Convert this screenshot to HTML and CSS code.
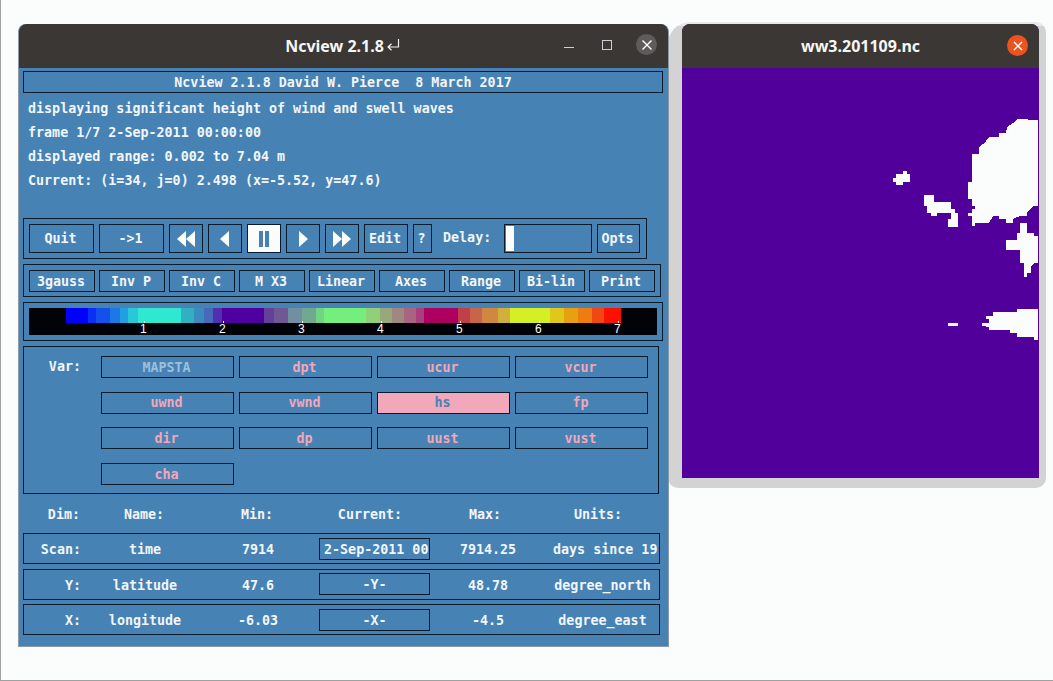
FILE: index.html
```html
<!DOCTYPE html>
<html lang="en">
  <head>
    <meta charset="utf-8">
    <title>Ncview</title>
    <link rel="stylesheet" href="styles.css">
  </head>
  <body>
    <div class="desktop">

      <!-- picture window goes first, the control window sits over its shadow -->
      <div class="map_shadow"></div>
      <div class="window map_window">
        <div class="titlebar">
          <span class="title">ww3.201109.nc</span>
          <span class="close close_active">
            <svg width="10" height="10" viewBox="0 0 10 10"><path d="M1 1L9 9M9 1L1 9" stroke="#fff" stroke-width="1.4"/></svg>
          </span>
        </div>
        <svg class="map" width="356" height="410" viewBox="682 68 356 410" shape-rendering="crispEdges">
          <rect x="682" y="68" width="356" height="410" fill="#52009c"/>
          <g fill="#fbfdfd">
            <polygon points="1038,120 1017,119 1013,123 1007,127 1006,133 999,133 999,137 989,137 986,141 983,144 979,147 979,154 972,154 972,182 968,182 968,199 972,199 972,206 975,206 975,209 972,209 972,213 968,213 968,216 972,216 972,226 975,226 975,223 989,223 993,216 999,216 999,219 1006,219 1006,223 1013,223 1013,219 1020,216 1027,216 1027,213 1033,206 1038,206"/>
            <polygon points="903,171 907,171 907,174 910,174 910,182 903,182 903,185 896,185 896,182 893,182 893,178 896,178 896,174 903,174"/>
            <polygon points="924,195 934,195 934,202 951,202 951,209 955,209 955,213 958,213 958,227 948,227 948,219 951,219 951,213 937,213 937,216 931,216 931,213 927,213 927,206 924,206"/>
            <polygon points="1020,223 1027,223 1027,233 1034,233 1034,236 1038,236 1038,263 1034,263 1031,267 1031,273 1027,273 1027,277 1024,277 1024,263 1020,263 1020,250 1006,250 1006,240 1017,240 1017,233 1020,233"/>
            <polygon points="1017,309 1038,309 1038,340 1034,340 1034,337 1017,337 1017,333 1010,333 1010,330 989,330 989,327 982,326 982,323 989,323 989,319 986,319 986,316 993,316 993,312 1017,312"/>
            <rect x="948" y="323" width="10" height="3"/>
          </g>
        </svg>
      </div>

      <div class="window control_window">
        <div class="titlebar">
          <span class="title">Ncview 2.1.8
            <svg class="return_mark" width="13" height="12" viewBox="0 0 13 12"><path d="M11.5 0V8H1M4.5 4.8L1 8L4.5 11.2" fill="none" stroke="#f2f2f2" stroke-width="1.2"/></svg>
          </span>
          <div class="window_btns">
            <span class="win_min"></span>
            <span class="win_max"></span>
            <span class="close">
              <svg width="10" height="10" viewBox="0 0 10 10"><path d="M0.5 0.5L9.5 9.5M9.5 0.5L0.5 9.5" stroke="#fff" stroke-width="1.4"/></svg>
            </span>
          </div>
        </div>

        <div class="body">
          <div class="version">Ncview 2.1.8 David W. Pierce  8 March 2017</div>

          <div class="info">
            <p>displaying significant height of wind and swell waves</p>
            <p>frame 1/7 2-Sep-2011 00:00:00</p>
            <p>displayed range: 0.002 to 7.04 m</p>
            <p>Current: (i=34, j=0) 2.498 (x=-5.52, y=47.6)</p>
          </div>

          <div class="panel controls">
            <button class="btn wide">Quit</button>
            <button class="btn wide">-&gt;1</button>
            <button class="btn icon">
              <svg width="20" height="16" viewBox="0 0 20 16"><path d="M10 0V16L1 8ZM19 0V16L10 8Z" fill="#fbfdfd"/></svg>
            </button>
            <button class="btn icon">
              <svg width="10" height="16" viewBox="0 0 10 16"><path d="M9 0V16L0 8Z" fill="#fbfdfd"/></svg>
            </button>
            <button class="btn icon pause">
              <svg width="12" height="16" viewBox="0 0 12 16"><path d="M1 0H5V16H1ZM7 0H11V16H7Z" fill="#4682b4"/></svg>
            </button>
            <button class="btn icon">
              <svg width="10" height="16" viewBox="0 0 10 16"><path d="M1 0V16L10 8Z" fill="#fbfdfd"/></svg>
            </button>
            <button class="btn icon">
              <svg width="18" height="16" viewBox="0 0 18 16"><path d="M0 0V16L9 8ZM9 0V16L18 8Z" fill="#fbfdfd"/></svg>
            </button>
            <button class="btn edit">Edit</button>
            <button class="btn help">?</button>
            <span class="delay_label">Delay:</span>
            <div class="delay"><div class="delay_thumb"></div></div>
            <button class="btn opts">Opts</button>
          </div>

          <div class="panel options">
            <button class="btn">3gauss</button>
            <button class="btn">Inv P</button>
            <button class="btn">Inv C</button>
            <button class="btn">M X3</button>
            <button class="btn">Linear</button>
            <button class="btn">Axes</button>
            <button class="btn">Range</button>
            <button class="btn">Bi-lin</button>
            <button class="btn">Print</button>
          </div>

          <div class="panel colorbar_panel">
            <div class="colorbar">
              <div class="colors"></div>
              <div class="ticks">
                <span class="tick">1</span>
                <span class="tick">2</span>
                <span class="tick">3</span>
                <span class="tick">4</span>
                <span class="tick">5</span>
                <span class="tick">6</span>
                <span class="tick">7</span>
              </div>
            </div>
          </div>

          <div class="panel vars">
            <div class="var_label">Var:</div>
            <div class="var_grid">
              <button class="btn var dim_var">MAPSTA</button>
              <button class="btn var">dpt</button>
              <button class="btn var">ucur</button>
              <button class="btn var">vcur</button>
              <button class="btn var">uwnd</button>
              <button class="btn var">vwnd</button>
              <button class="btn var selected">hs</button>
              <button class="btn var">fp</button>
              <button class="btn var">dir</button>
              <button class="btn var">dp</button>
              <button class="btn var">uust</button>
              <button class="btn var">vust</button>
              <button class="btn var">cha</button>
            </div>
          </div>

          <div class="dim_head">
            <span class="right">Dim:</span>
            <span>Name:</span>
            <span>Min:</span>
            <span>Current:</span>
            <span>Max:</span>
            <span>Units:</span>
          </div>

          <div class="dim_row">
            <span class="right">Scan:</span>
            <span>time</span>
            <span>7914</span>
            <span class="current left">2-Sep-2011 00</span>
            <span>7914.25</span>
            <span class="units">days since 19</span>
          </div>
          <div class="dim_row">
            <span class="right">Y:</span>
            <span>latitude</span>
            <span>47.6</span>
            <span class="current">-Y-</span>
            <span>48.78</span>
            <span>degree_north</span>
          </div>
          <div class="dim_row">
            <span class="right">X:</span>
            <span>longitude</span>
            <span>-6.03</span>
            <span class="current">-X-</span>
            <span>-4.5</span>
            <span>degree_east</span>
          </div>
        </div>
      </div>

    </div>
  </body>
</html>
```

FILE: styles.css
```css
* {
  box-sizing: border-box;
}

body {
  margin: 0;
  background: #fbfcfc;
}

p {
  margin: 0;
}

.desktop {
  position: relative;
  width: 1053px;
  height: 681px;
  overflow: hidden;
  border-left: 1px solid #a0a0a0;
  border-bottom: 1px solid #a0a0a0;
}

/* windows */
.window {
  position: absolute;
  border-radius: 8px 8px 0 0;
}

.control_window {
  left: 17px;
  top: 24px;
  width: 651px;
  height: 623px;
  border: 1px solid #8d9aa5;
  border-top: none;
  background: #4682b4;
}

.map_window {
  left: 681px;
  top: 24px;
  width: 357px;
  height: 454px;
  background: #52009c;
}

.map_shadow {
  position: absolute;
  left: 667px;
  top: 22px;
  width: 378px;
  height: 466px;
  border-radius: 22px 10px 10px 10px;
  background: linear-gradient(#e8e8e8 0 4px, #d3d3d3 4px);
}

.titlebar {
  position: relative;
  height: 44px;
  display: flex;
  align-items: center;
  justify-content: center;
  background: #3a3735;
  border-radius: 8px 8px 0 0;
  color: #f6f6f6;
  font-family: "Noto Sans", sans-serif;
  font-size: 16px;
  font-weight: 700;
}

.title {
  display: flex;
  align-items: center;
  gap: 3px;
}

.return_mark {
  margin-top: -2px;
  margin-right: 2px;
}

.window_btns {
  position: absolute;
  right: 11px;
  top: 10px;
  display: flex;
  align-items: center;
}

.win_min {
  width: 10px;
  height: 1px;
  margin-top: 6px;
  margin-right: 28px;
  background: #cfcfcf;
}

.win_max {
  width: 10px;
  height: 10px;
  margin-right: 24px;
  border: 1px solid #cfcfcf;
}

.close {
  width: 21px;
  height: 21px;
  display: flex;
  align-items: center;
  justify-content: center;
  border-radius: 50%;
  background: #5e5c5a;
}

.close_active {
  position: absolute;
  right: 11px;
  top: 11px;
  background: #e95420;
}

.map {
  display: block;
}

/* ncview's own widgets */
.body {
  height: 579px;
  padding: 3px 0 0 4px;
  font-family: "DejaVu Sans Mono", monospace;
  font-size: 13.35px;
  font-weight: 700;
  color: #f2f6f9;
}

.version {
  width: 640px;
  height: 22px;
  line-height: 22px;
  border: 1px solid #0b1a28;
  text-align: center;
  white-space: pre;
}

.info {
  margin-top: 3px;
  margin-bottom: 26px;
  padding-left: 5px;
}

.info p {
  height: 24px;
  line-height: 26px;
}

.panel {
  border: 1px solid #0b1a28;
  margin-bottom: 5px;
}

.btn {
  margin: 0;
  padding: 0 2px 0 0;
  background: #4682b4;
  border: 1px solid #0b1a28;
  color: #f2f6f9;
  font-family: "DejaVu Sans Mono", monospace;
  font-size: 13.35px;
  font-weight: 700;
  white-space: nowrap;
}

.controls {
  width: 624px;
  height: 41px;
  padding: 5px;
  display: flex;
  align-items: stretch;
  gap: 5px;
}

.wide {
  width: 65px;
}

.icon {
  width: 34px;
  padding: 0;
  display: flex;
  align-items: center;
  justify-content: center;
}

.pause {
  background: #fbfdfd;
}

.edit {
  width: 44px;
}

.help {
  width: 19px;
}

.delay_label {
  width: 62px;
  padding-left: 6px;
  line-height: 28px;
}

.delay {
  width: 88px;
  padding: 1px;
  border: 1px solid #0b1a28;
}

.delay_thumb {
  width: 8px;
  height: 100%;
  background: #fbfdfd;
}

.opts {
  width: 43px;
}

.options {
  width: 638px;
  height: 33px;
  padding: 5px 5px 4px;
  display: flex;
  gap: 4px;
}

.options .btn {
  width: 66px;
}

.colorbar_panel {
  width: 640px;
  height: 39px;
  padding: 5px;
}

.colorbar {
  width: 628px;
  height: 27px;
  padding-left: 37px;
  background: #020308;
}

.colors {
  width: 555px;
  height: 15px;
  background: linear-gradient(90deg,
    #0000ff 0 22px, #0a30f4 22px 30px, #1450ec 30px 44px, #1c78e4 44px 54px,
    #20a0e0 54px 62px, #28c8d8 62px 72px, #2ee8d0 72px 115px, #30b0c0 115px 128px,
    #3a8cc0 128px 138px, #4868b8 138px 147px, #5030b0 147px 156px, #5000a0 156px 198px,
    #644098 198px 208px, #705894 208px 222px, #7090a0 222px 236px, #70a890 236px 250px,
    #70d480 250px 258px, #74ee7c 258px 300px, #90d078 300px 314px, #98a87c 314px 326px,
    #a08880 326px 338px, #a86480 338px 350px, #a84080 350px 358px, #ae0060 358px 392px,
    #c04048 392px 404px, #c86448 404px 416px, #d08840 416px 432px, #d0b038 432px 444px,
    #d4f024 444px 484px, #e0c818 484px 498px, #e8a010 498px 512px, #ee7c10 512px 526px,
    #f04810 526px 538px, #ff1000 538px 555px);
}

.ticks {
  display: flex;
  margin-left: 78px;
  color: #fff;
  font-family: "Liberation Sans", sans-serif;
  font-size: 12px;
  font-weight: 400;
  line-height: 12px;
}

.tick {
  position: relative;
  width: 79px;
  flex: none;
  margin-left: -4px;
  margin-right: 4px;
}

.tick::before {
  content: "";
  position: absolute;
  left: 4px;
  top: -2px;
  width: 1px;
  height: 2px;
  background: #fff;
}

.vars {
  width: 636px;
  height: 148px;
  padding: 9px 0 0 0;
  display: flex;
  margin-bottom: 0;
}

.var_label {
  width: 57px;
  margin-right: 20px;
  text-align: right;
  line-height: 22px;
}

.var_grid {
  display: grid;
  grid-template-columns: repeat(4, 133px);
  grid-auto-rows: 22px;
  column-gap: 5px;
  row-gap: 13.7px;
}

.var {
  color: #f4a6b8;
}

.dim_var {
  color: #9cc0da;
}

.selected {
  background: #f2a8ba;
  color: #4682b4;
}

.dim_head,
.dim_row {
  display: grid;
  align-items: center;
  text-align: center;
  white-space: nowrap;
}

.dim_head {
  grid-template-columns: 57px 128px 98px 128px 102px 124px;
  height: 22px;
  margin: 9px 0 8px;
}

.dim_row {
  grid-template-columns: 57px 128px 98px 12px 111px 116px 113px;
  width: 637px;
  height: 31px;
  margin-bottom: 4.6px;
  border: 1px solid #0b1a28;
}

.dim_row span {
  padding-top: 2px;
}

.right {
  text-align: right;
}

.dim_row .current {
  grid-column: 5;
  height: 22px;
  padding-top: 0;
  line-height: 22px;
  border: 1px solid #0b1a28;
}

.dim_row .left {
  padding-left: 4px;
  text-align: left;
}

.units {
  padding-left: 7px;
  text-align: left;
}
```
